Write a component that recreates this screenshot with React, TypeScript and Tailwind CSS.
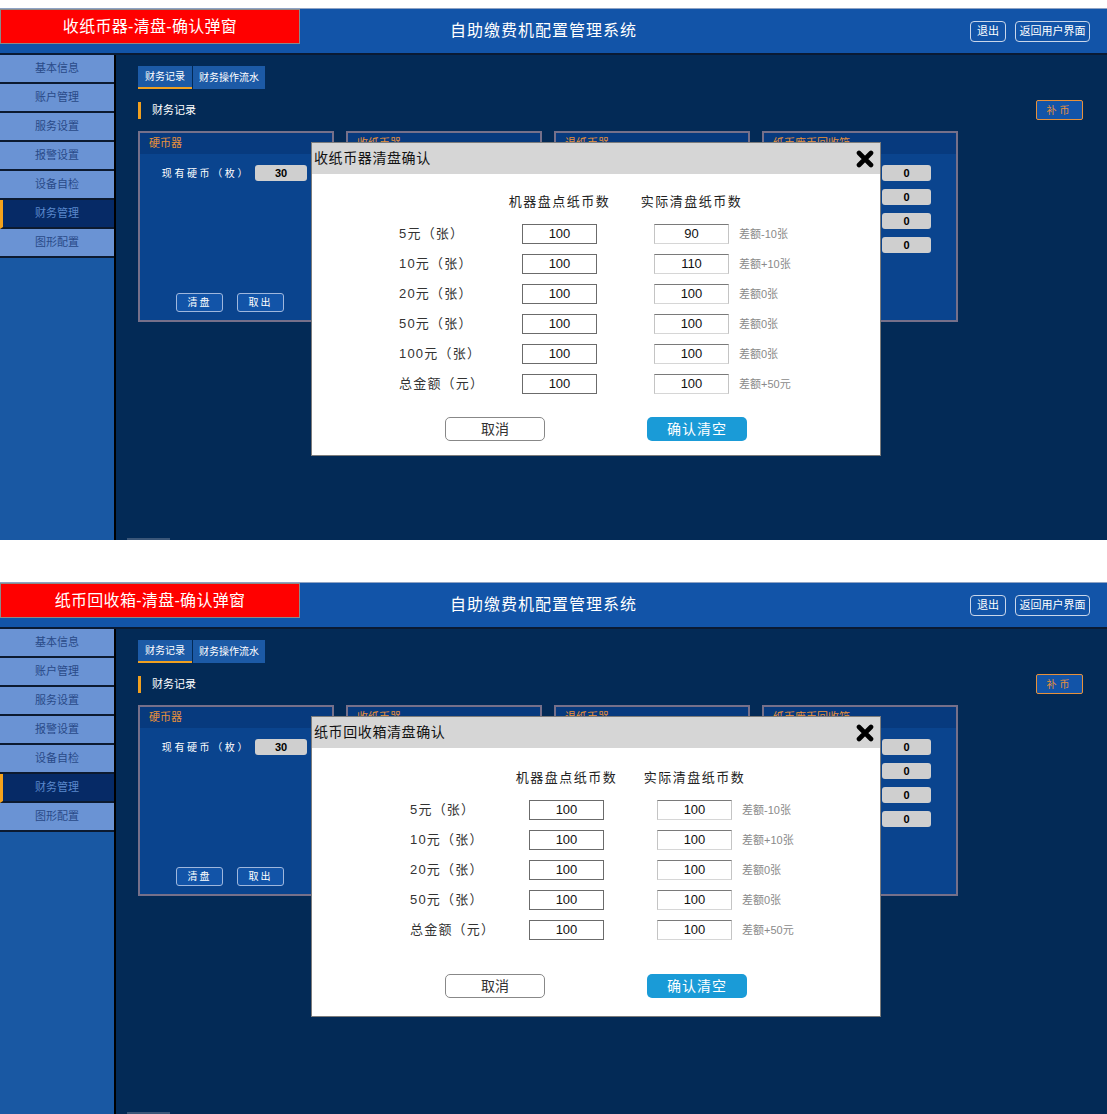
import React from 'react';

type Row = { label: string; machine: string; actual: string; diff: string };

type Layout = {
  body: string;
  rowPl: string;
  label: string;
  gap2: string;
  btnMt: string;
};

type Panel = {
  tag: string;
  title: string;
  rows: Row[];
  layout: Layout;
};

const panels: Panel[] = [
  {
    tag: '收纸币器-清盘-确认弹窗',
    title: '收纸币器清盘确认',
    rows: [
      { label: '5元（张）', machine: '100', actual: '90', diff: '差额-10张' },
      { label: '10元（张）', machine: '100', actual: '110', diff: '差额+10张' },
      { label: '20元（张）', machine: '100', actual: '100', diff: '差额0张' },
      { label: '50元（张）', machine: '100', actual: '100', diff: '差额0张' },
      { label: '100元（张）', machine: '100', actual: '100', diff: '差额0张' },
      { label: '总金额（元）', machine: '100', actual: '100', diff: '差额+50元' },
    ],
    layout: {
      body: 'pt-[13px] pb-[14px]',
      rowPl: 'pl-[87px]',
      label: 'w-[123px]',
      gap2: 'ml-[57px]',
      btnMt: 'mt-[18px]',
    },
  },
  {
    tag: '纸币回收箱-清盘-确认弹窗',
    title: '纸币回收箱清盘确认',
    rows: [
      { label: '5元（张）', machine: '100', actual: '100', diff: '差额-10张' },
      { label: '10元（张）', machine: '100', actual: '100', diff: '差额+10张' },
      { label: '20元（张）', machine: '100', actual: '100', diff: '差额0张' },
      { label: '50元（张）', machine: '100', actual: '100', diff: '差额0张' },
      { label: '总金额（元）', machine: '100', actual: '100', diff: '差额+50元' },
    ],
    layout: {
      body: 'pt-[15px] pb-[18px]',
      rowPl: 'pl-[98px]',
      label: 'w-[119px]',
      gap2: 'ml-[53px]',
      btnMt: 'mt-[29px]',
    },
  },
];

const menu = ['基本信息', '账户管理', '服务设置', '报警设置', '设备自检', '财务管理', '图形配置'];

const CloseIcon = () => (
  <svg width="18" height="18" viewBox="0 0 18 18">
    <path d="M3 3 L15 15 M15 3 L3 15" stroke="#000" strokeWidth="4.6" strokeLinecap="round" />
  </svg>
);

const Card = ({ title, children }: { title: string; children?: React.ReactNode }) => (
  <div className="flex h-[191px] w-[196px] flex-col border-2 border-[#76708a] bg-[#0a448e]">
    <div className="flex h-[21px] items-center bg-[#073a7e] pl-[9px] text-[11px] text-[#e8913a]">{title}</div>
    {children}
  </div>
);

const Modal = ({ panel }: { panel: Panel }) => {
  const l = panel.layout;
  return (
    <div className="absolute left-[311px] top-[134px] w-[570px] border border-[#7c7c7c] bg-white">
      <div className="flex h-[31px] items-center justify-between bg-[#d6d6d6] pl-[2px] pr-[6px]">
        <span className="text-[14px] tracking-[0.6px] text-[#111]">{panel.title}</span>
        <CloseIcon />
      </div>
      <div className={`flex flex-col ${l.body}`}>
        <div className={`flex h-[30px] items-center ${l.rowPl}`}>
          <div className={l.label} />
          <div className="flex w-[75px] justify-center whitespace-nowrap text-[13px] tracking-[1.5px] text-[#222]">
            机器盘点纸币数
          </div>
          <div className={`flex w-[75px] justify-center whitespace-nowrap text-[13px] tracking-[1.5px] text-[#222] ${l.gap2}`}>
            实际清盘纸币数
          </div>
        </div>
        <div className="mt-[2px] flex flex-col">
          {panel.rows.map((r) => (
            <div key={r.label} className={`flex h-[30px] items-center ${l.rowPl}`}>
              <div className={`${l.label} whitespace-nowrap text-[13px] tracking-[1.2px] text-[#333]`}>{r.label}</div>
              <div className="flex h-[20px] w-[75px] items-center justify-center border border-[#6b6b6b] text-[13px] text-[#111]">
                {r.machine}
              </div>
              <div
                className={`flex h-[20px] w-[75px] items-center justify-center border border-x-[#c4c4c4] border-b-[#d6d6d6] border-t-[#7a7a7a] text-[13px] text-[#111] ${l.gap2}`}
              >
                {r.actual}
              </div>
              <div className="ml-[10px] text-[11px] text-[#8a8a8a]">{r.diff}</div>
            </div>
          ))}
        </div>
        <div className={`flex pl-[133px] ${l.btnMt}`}>
          <div className="flex h-[24px] w-[100px] items-center justify-center rounded-[5px] border border-[#888] text-[14px] text-[#333]">
            取消
          </div>
          <div className="ml-[102px] flex h-[24px] w-[100px] items-center justify-center rounded-[5px] bg-[#1a9bd7] text-[14px] tracking-[1px] text-white">
            确认清空
          </div>
        </div>
      </div>
    </div>
  );
};

const Screen = ({ panel }: { panel: Panel }) => (
  <div className="relative flex h-[532px] w-full flex-col overflow-hidden">
    {/* top bar */}
    <div className="relative flex h-[47px] shrink-0 items-center border-t border-b-2 border-t-[#8fa3c4] border-b-[#0a1a33] bg-[#1254a8]">
      <div className="absolute left-0 top-0 flex h-[35px] w-[300px] items-center justify-center border border-[#8a8a8a] bg-[#ff0000] text-[16px] tracking-[0.3px] text-white">
        {panel.tag}
      </div>
      <div className="flex flex-1 justify-center text-[16px] tracking-[1px] text-white">
        <span className="ml-[-20px]">自助缴费机配置管理系统</span>
      </div>
      <div className="absolute right-[17px] top-[12px] flex gap-[9px]">
        <div className="flex h-[21px] w-[36px] items-center justify-center rounded-[4px] border border-[#c9d6ea] text-[11px] text-white">
          退出
        </div>
        <div className="flex h-[21px] w-[75px] items-center justify-center rounded-[4px] border border-[#c9d6ea] text-[11px] text-white">
          返回用户界面
        </div>
      </div>
    </div>

    <div className="flex flex-1">
      {/* sidebar */}
      <div className="flex w-[116px] shrink-0 flex-col border-r-2 border-black bg-[#1958a3]">
        {menu.map((m) => (
          <div
            key={m}
            className={
              m === '财务管理'
                ? 'flex h-[29px] items-center justify-center border-b-2 border-l-[3px] border-b-[#0c1a30] border-l-[#f5a21c] bg-[#062a66] pr-[3px] text-[11px] text-[#5a88cc]'
                : 'flex h-[29px] items-center justify-center border-b-2 border-[#0c1a30] bg-[#6a93d4] text-[11px] text-[#294a88]'
            }
          >
            {m}
          </div>
        ))}
      </div>

      {/* main */}
      <div className="flex flex-1 flex-col bg-[#032a56] pl-[22px] pr-[24px] pt-[11px]">
        <div className="flex">
          <div className="flex h-[23px] w-[54px] items-center justify-center border-b-2 border-[#f0a020] bg-[#1c5aa6] text-[10px] text-white">
            财务记录
          </div>
          <div className="ml-[1px] flex h-[23px] w-[72px] items-center justify-center bg-[#1c5aa6] text-[10px] text-white">
            财务操作流水
          </div>
        </div>

        <div className="mt-[11px] flex items-center justify-between">
          <div className="flex items-center">
            <div className="h-[17px] w-[3px] bg-[#f0a020]" />
            <span className="ml-[11px] text-[11px] text-white">财务记录</span>
          </div>
          <div className="flex h-[20px] w-[47px] items-center justify-center rounded-[2px] border border-[#e8913a] bg-[#1254a8] text-[10px] tracking-[3px] text-[#e8913a]">
            补币
          </div>
        </div>

        <div className="mt-[11px] flex gap-[12px]">
          <Card title="硬币器">
            <div className="mt-[11px] flex items-center justify-end gap-[5px] pr-[25px]">
              <span className="text-[10px] tracking-[2.6px] text-white">现有硬币（枚）</span>
              <div className="flex h-[16px] w-[52px] items-center justify-center rounded-[3px] bg-[#cfcfcf] text-[11px] font-bold text-black">
                30
              </div>
            </div>
            <div className="mt-auto flex gap-[14px] pb-[8px] pl-[36px]">
              <div className="flex h-[19px] w-[47px] items-center justify-center rounded-[3px] border border-[#9fb7dd] bg-[#1254a8] text-[10px] tracking-[2px] text-white">
                清盘
              </div>
              <div className="flex h-[19px] w-[47px] items-center justify-center rounded-[3px] border border-[#9fb7dd] bg-[#1254a8] text-[10px] tracking-[2px] text-white">
                取出
              </div>
            </div>
          </Card>
          <Card title="收纸币器" />
          <Card title="退纸币器" />
          <Card title="纸币废币回收箱">
            <div className="mt-[11px] flex flex-col items-end gap-[8px] pr-[25px]">
              {['0', '0', '0', '0'].map((v, i) => (
                <div key={i} className="flex h-[16px] w-[49px] items-center justify-center rounded-[3px] bg-[#cfcfcf] text-[11px] font-bold text-black">
                  {v}
                </div>
              ))}
            </div>
          </Card>
        </div>

        <div className="mt-auto ml-[-11px] h-[2px] w-[43px] bg-[#3b5678]" />
      </div>
    </div>

    <Modal panel={panel} />
  </div>
);

export default function App() {
  return (
    <div className="flex min-h-[1114px] w-[1107px] flex-col gap-[42px] bg-white pt-[8px] font-['Liberation_Sans','Noto_Sans_CJK_SC',sans-serif]">
      {panels.map((p) => (
        <Screen key={p.tag} panel={p} />
      ))}
    </div>
  );
}
